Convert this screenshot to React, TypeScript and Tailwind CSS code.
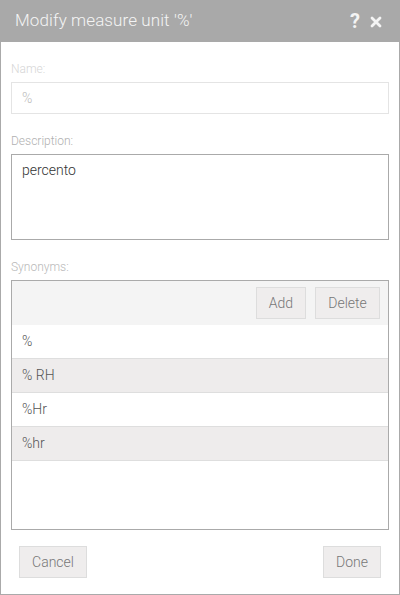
const synonyms = ["%", "% RH", "%Hr", "%hr"];

function App() {
  return (
    <div className="w-[400px] h-[595px] bg-white font-['Roboto',sans-serif]">
      <div className="h-[42px] bg-[#a9a9a9] flex items-center justify-between pl-[15px] pr-[18px]">
        <span className="text-[17px] font-light text-[#f4f4f4] tracking-[0.1px]">Modify measure unit '%'</span>
        <div className="flex items-center gap-[10px]">
          <span className="text-[20px] font-bold text-[#f4f4f4] leading-none">?</span>
          <svg width="12" height="12" viewBox="0 0 12 12" className="mt-[2px]">
            <path d="M2 2 L10 10 M10 2 L2 10" stroke="#f4f4f4" strokeWidth="2.8" strokeLinecap="round" />
          </svg>
        </div>
      </div>
      <div className="h-[553px] border-x border-b border-[#aaaaaa] px-[10px] pt-[19px] flex flex-col">
        <label className="block h-[16px] leading-[16px] text-[12px] font-light text-[#d6d6d6] mb-[5px]">Name:</label>
        <div className="h-[32px] border border-[#e4e4e4] flex items-center px-[10px] text-[14px] font-light text-[#bbbbbb]">%</div>

        <label className="block h-[16px] leading-[16px] text-[12px] font-light text-[#b0b0b0] mt-[19px] mb-[5px]">Description:</label>
        <div className="h-[86px] border border-[#aaaaaa] px-[10px] pt-[5px] text-[14px] font-light text-[#333333]">percento</div>

        <label className="block h-[16px] leading-[16px] text-[12px] font-light text-[#b8b8b8] mt-[19px] mb-[5px]">Synonyms:</label>
        <div className="h-[250px] border border-[#aaaaaa] flex flex-col">
          <div className="h-[44px] bg-[#f4f4f4] flex justify-end items-start pt-[6px] pr-[8px] gap-[9px]">
            <button className="h-[32px] w-[50px] bg-[#efeded] border border-[#dddddd] text-[14px] font-light text-[#777777]">Add</button>
            <button className="h-[32px] w-[65px] bg-[#efeded] border border-[#dddddd] text-[14px] font-light text-[#777777]">Delete</button>
          </div>
          {synonyms.map((s, i) => (
            <div
              key={s}
              className={`h-[34px] flex items-center px-[10px] border-b border-[#dedede] text-[14px] font-light text-[#555555] ${i % 2 === 1 ? "bg-[#eeecec]" : "bg-white"}`}
            >
              {s}
            </div>
          ))}
        </div>

        <div className="flex justify-between px-[8px] mt-[16px]">
          <button className="h-[32px] w-[68px] bg-[#efeded] border border-[#dddddd] text-[14px] font-light text-[#777777]">Cancel</button>
          <button className="h-[32px] w-[58px] bg-[#efeded] border border-[#dddddd] text-[14px] font-light text-[#777777]">Done</button>
        </div>
      </div>
    </div>
  );
}

export default App;
